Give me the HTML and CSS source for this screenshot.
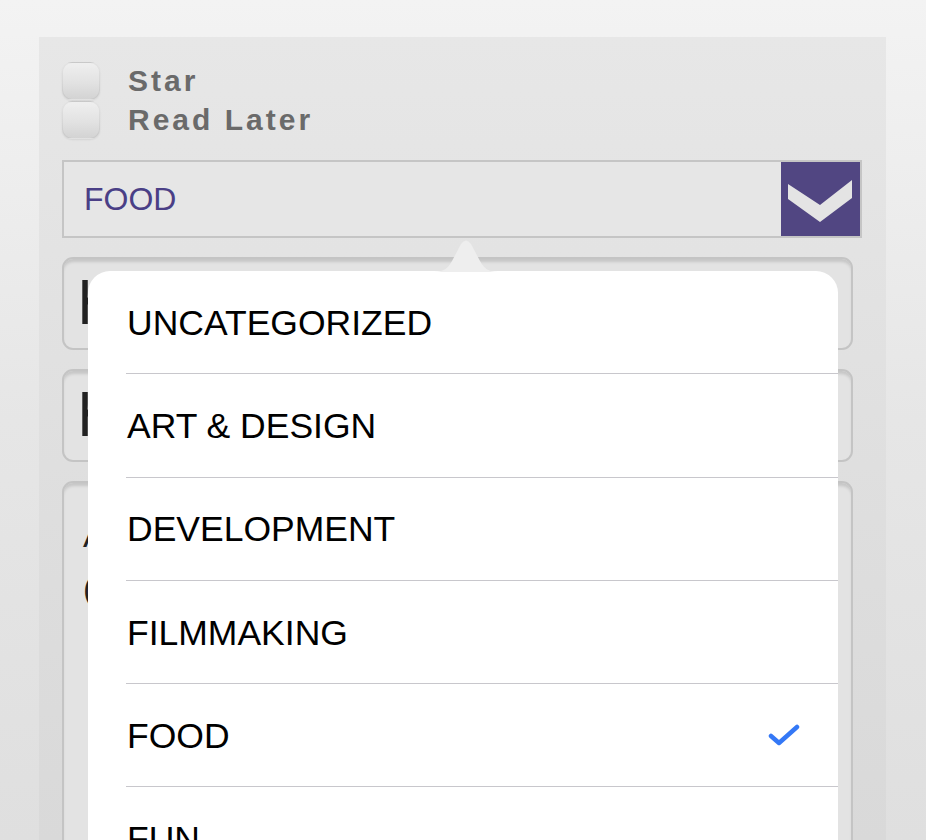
FILE: index.html
```html
<!DOCTYPE html>
<html>
<head>
<meta charset="utf-8">
<link rel="stylesheet" href="styles.css">
</head>
<body>
<div class="panel">
  <label class="check"><span class="box"></span><span class="check-label">Star</span></label>
  <label class="check"><span class="box"></span><span class="check-label">Read Later</span></label>
  <div class="select">
    <span class="select-value">FOOD</span>
    <span class="select-btn">
      <svg width="79" height="75" viewBox="0 0 79 75"><path d="M7 22 L39 43 L71 18 L71 36 L39 60 L7 37 Z" fill="#e4e4e4"/></svg>
    </span>
  </div>
  <div class="field">http://</div>
  <div class="field">http://</div>
  <div class="field area">A new recipe to try<br>(from the weekend)</div>
</div>

<div class="popover">
  <svg class="arrow" width="64" height="32" viewBox="0 0 64 32"><path d="M0 32 C10 32 14 28 18 21 L27 4 Q32 -3 37 4 L46 21 C50 28 54 32 64 32 Z" fill="#eeeeee"/></svg>
  <div class="menu">
    <div class="item">UNCATEGORIZED</div>
    <div class="item">ART &amp; DESIGN</div>
    <div class="item">DEVELOPMENT</div>
    <div class="item">FILMMAKING</div>
    <div class="item selected">FOOD
      <svg class="tick" width="32" height="26" viewBox="0 0 32 26"><polyline points="3,13 11,20 29,4" fill="none" stroke="#3478f6" stroke-width="4.5" stroke-linecap="round" stroke-linejoin="round"/></svg>
    </div>
    <div class="item">FUN</div>
  </div>
</div>
</body>
</html>
```

FILE: styles.css
```css
html, body {
  margin: 0;
  padding: 0;
  height: 840px;
  overflow: hidden;
}
body {
  background: linear-gradient(180deg, #f3f3f3 0%, #e6e6e6 50%, #dfdfdf 100%);
  font-family: "Liberation Sans", Arial, sans-serif;
  position: relative;
}
.panel {
  margin: 37px 0 0 39px;
  width: 847px;
  height: 803px;
  box-sizing: border-box;
  padding: 24px 0 0 23px;
  background: linear-gradient(180deg, #e7e7e7 0%, #dedede 60%, #d9d9d9 100%);
}
.check {
  display: flex;
  align-items: center;
  height: 39px;
}
.box {
  width: 38px;
  height: 38px;
  box-sizing: border-box;
  border-radius: 10px;
  border: 1px solid rgba(0,0,0,0.05);
  background: linear-gradient(180deg, #efefef 0%, #e2e2e2 55%, #d3d3d3 100%);
  box-shadow: 0 1px 2px rgba(0,0,0,0.08);
  flex: none;
}
.check-label {
  margin-left: 28px;
  font-size: 30px;
  font-weight: 700;
  letter-spacing: 3px;
  color: #6a6a6a;
}
.select {
  margin-top: 21px;
  width: 800px;
  height: 78px;
  box-sizing: border-box;
  border: 2px solid #c5c5c5;
  background: #e6e6e6;
  display: flex;
  align-items: center;
}
.select-value {
  flex: 1;
  padding-left: 20px;
  font-size: 32px;
  color: #4a3f86;
}
.select-btn {
  width: 79px;
  height: 100%;
  background: #514682;
  display: flex;
}
.field {
  margin-top: 19px;
  width: 791px;
  height: 93px;
  box-sizing: border-box;
  border: 2px solid #c4c4c4;
  border-radius: 11px;
  background: #e3e3e3;
  box-shadow: inset 0 4px 3px -1px rgba(0,0,0,0.13);
  padding: 13px 0 0 14px;
  font-size: 62px;
  line-height: 62px;
  color: #222;
  white-space: nowrap;
  overflow: hidden;
}
.field.area {
  height: 400px;
  font-size: 34px;
  line-height: 53px;
  padding: 26px 0 0 19px;
}
.popover {
  position: absolute;
  left: 88px;
  top: 240px;
  width: 750px;
}
.arrow {
  display: block;
  margin-left: 346px;
}
.menu {
  margin-top: -1px;
  background: #ffffff;
  border-radius: 22px 22px 0 0;
  padding-left: 38px;
  height: 700px;
}
.item {
  height: 103.3px;
  box-sizing: border-box;
  border-bottom: 1px solid #c8c7cc;
  display: flex;
  align-items: center;
  justify-content: space-between;
  padding: 2px 38px 0 1px;
  font-size: 35.5px;
  color: #000;
}
.tick {
  display: block;
}
```
